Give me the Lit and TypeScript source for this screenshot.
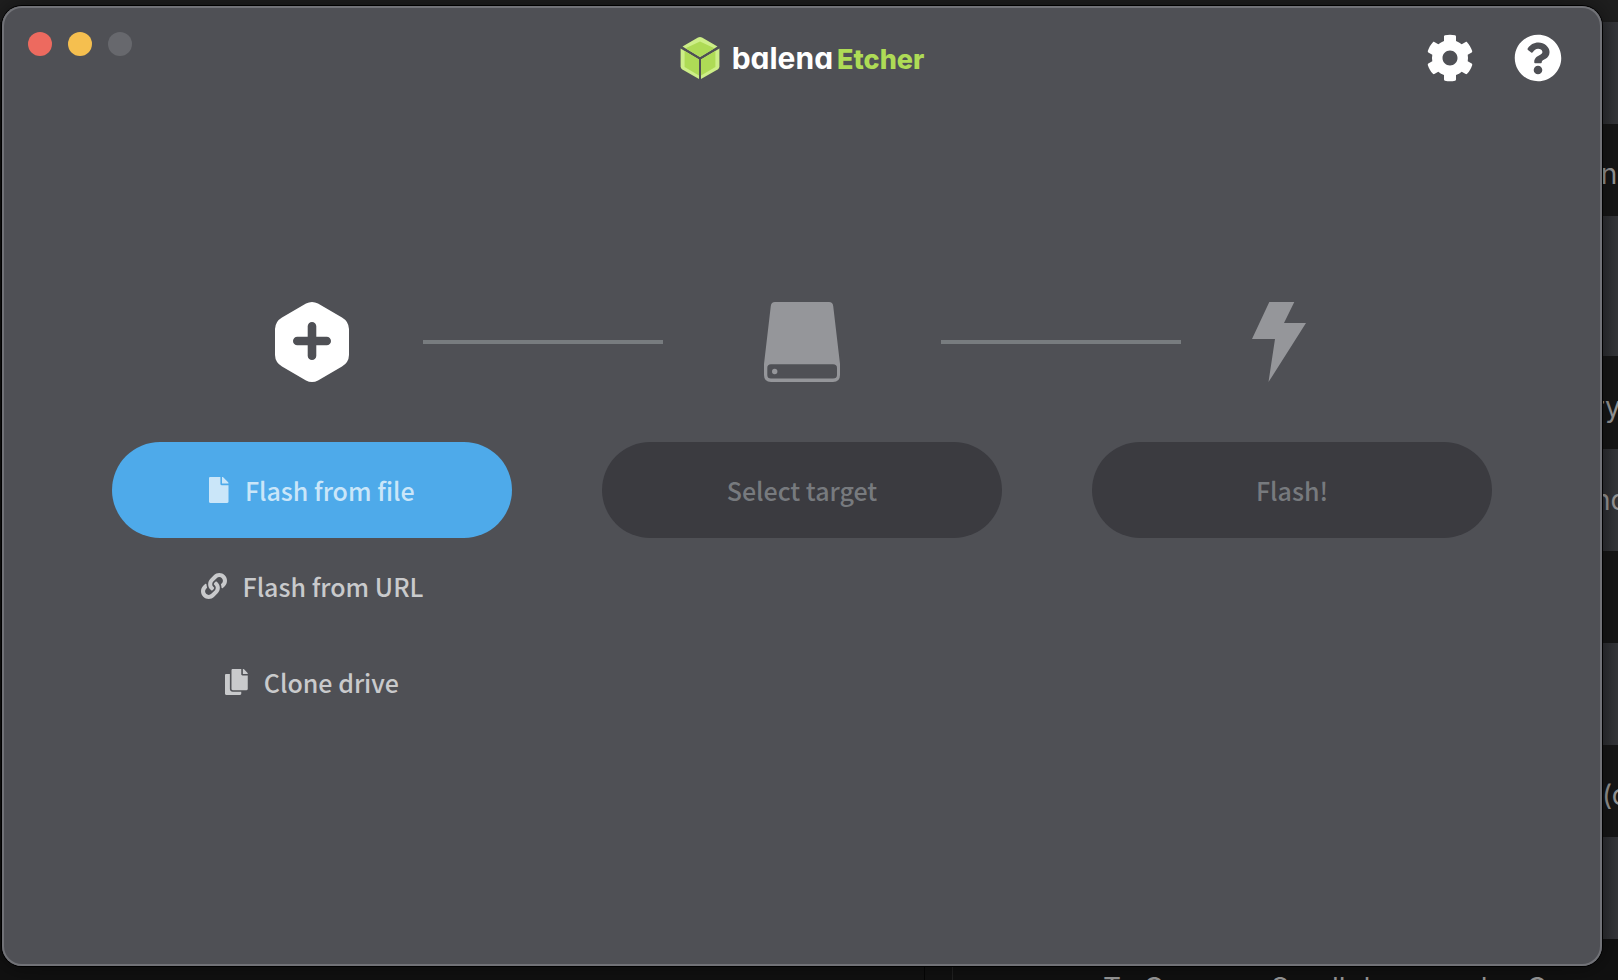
import { LitElement, html, css, svg } from "lit";
import { customElement, property } from "lit/decorators.js";

const GLYPHS: Record<string, { box: string; d: string }> = {
  cog: {
    box: "0 0 512 512",
    d: "M487.4 315.7l-42.6-24.6c4.3-23.2 4.3-47 0-70.2l42.6-24.6c4.9-2.8 7.1-8.6 5.5-14-11.1-35.6-30-67.8-54.7-94.6-3.8-4.1-10-5.1-14.8-2.3L380.8 110c-17.9-15.4-38.5-27.3-60.8-35.1V25.8c0-5.6-3.9-10.5-9.4-11.7-36.7-8.2-74.3-7.8-109.2 0-5.5 1.2-9.4 6.1-9.4 11.7V75c-22.2 7.9-42.8 19.8-60.8 35.1L88.7 85.5c-4.9-2.8-11-1.9-14.8 2.3-24.7 26.7-43.6 58.9-54.7 94.6-1.7 5.4.6 11.2 5.5 14L67.3 221c-4.3 23.2-4.3 47 0 70.2l-42.6 24.6c-4.9 2.8-7.1 8.6-5.5 14 11.1 35.6 30 67.8 54.7 94.6 3.8 4.1 10 5.1 14.8 2.3l42.6-24.6c17.9 15.4 38.5 27.3 60.8 35.1v49.2c0 5.6 3.9 10.5 9.4 11.7 36.7 8.2 74.3 7.8 109.2 0 5.5-1.2 9.4-6.1 9.4-11.7v-49.2c22.2-7.9 42.8-19.8 60.8-35.1l42.6 24.6c4.9 2.8 11 1.9 14.8-2.3 24.7-26.7 43.6-58.9 54.7-94.6 1.5-5.5-.7-11.3-5.6-14.1zM256 336c-44.1 0-80-35.9-80-80s35.9-80 80-80 80 35.9 80 80-35.9 80-80 80z",
  },
  question: {
    box: "0 0 512 512",
    d: "M504 256c0 136.997-111.043 248-248 248S8 392.997 8 256C8 119.083 119.043 8 256 8s248 111.083 248 248zM262.655 90c-54.497 0-89.255 22.957-116.549 63.758-3.536 5.286-2.353 12.415 2.715 16.258l34.699 26.31c5.205 3.947 12.621 3.008 16.665-2.122 17.864-22.658 30.113-35.797 57.303-35.797 20.429 0 45.698 13.148 45.698 32.958 0 14.976-12.363 22.667-32.534 33.976C247.128 238.528 216 254.941 216 296v4c0 6.627 5.373 12 12 12h56c6.627 0 12-5.373 12-12v-1.333c0-28.462 83.186-29.647 83.186-106.667 0-58.002-60.165-102-116.531-102zM256 338c-25.365 0-46 20.635-46 46 0 25.364 20.635 46 46 46s46-20.636 46-46c0-25.365-20.635-46-46-46z",
  },
  file: {
    box: "0 0 384 512",
    d: "M224 136V0H24C10.7 0 0 10.7 0 24v464c0 13.3 10.7 24 24 24h336c13.3 0 24-10.7 24-24V160H248c-13.2 0-24-10.8-24-24zm160-14.1v6.1H256V0h6.1c6.4 0 12.5 2.5 17 7l97.9 98c4.5 4.5 7 10.6 7 16.9z",
  },
  link: {
    box: "0 0 512 512",
    d: "M326.612 185.391c59.747 59.809 58.927 155.698.36 214.59-.11.12-.24.25-.36.37l-67.2 67.2c-59.27 59.27-155.699 59.262-214.96 0-59.27-59.26-59.27-155.7 0-214.96l37.106-37.106c9.84-9.84 26.786-3.3 27.294 10.606.648 17.722 3.826 35.527 9.69 52.721 1.986 5.822.567 12.262-3.783 16.612l-13.087 13.087c-28.026 28.026-28.905 73.66-1.155 101.96 28.024 28.579 74.086 28.749 102.325.51l67.2-67.19c28.191-28.191 28.073-73.757 0-101.83-3.701-3.694-7.429-6.564-10.341-8.569a16.037 16.037 0 0 1-6.947-12.606c-.396-10.567 3.348-21.456 11.698-29.806l21.054-21.055c5.521-5.521 14.182-6.199 20.584-1.731a152.482 152.482 0 0 1 20.522 17.197zM467.547 44.449c-59.261-59.262-155.69-59.27-214.96 0l-67.2 67.2c-.12.12-.25.25-.36.37-58.566 58.892-59.387 154.781.36 214.59a152.454 152.454 0 0 0 20.521 17.196c6.402 4.468 15.064 3.789 20.584-1.731l21.054-21.055c8.35-8.35 12.094-19.239 11.698-29.806a16.037 16.037 0 0 0-6.947-12.606c-2.912-2.005-6.64-4.875-10.341-8.569-28.073-28.073-28.191-73.639 0-101.83l67.2-67.19c28.239-28.239 74.3-28.069 102.325.51 27.75 28.3 26.872 73.934-1.155 101.96l-13.087 13.087c-4.35 4.35-5.769 10.79-3.783 16.612 5.864 17.194 9.042 34.999 9.69 52.721.509 13.906 17.454 20.446 27.294 10.606l37.106-37.106c59.271-59.259 59.271-155.699.001-214.959z",
  },
  copy: {
    box: "0 0 448 512",
    d: "M320 448v40c0 13.255-10.745 24-24 24H24c-13.255 0-24-10.745-24-24V120c0-13.255 10.745-24 24-24h72v296c0 30.879 25.121 56 56 56h168zm0-344V0H152c-13.255 0-24 10.745-24 24v368c0 13.255 10.745 24 24 24h272c13.255 0 24-10.745 24-24V128H344c-13.2 0-24-10.8-24-24zm120.971-31.029L375.029 7.029A24 24 0 0 0 358.059 0H352v96h96v-6.059a24 24 0 0 0-7.029-16.97z",
  },
};

@customElement("glyph-icon")
export class GlyphIcon extends LitElement {
  @property() name = "file";

  static styles = css`
    :host {
      display: block;
      height: 26px;
    }
    .glyph {
      display: block;
      height: 100%;
      fill: currentColor;
    }
  `;

  render() {
    const g = GLYPHS[this.name];
    return html`<svg class="glyph" viewBox=${g.box} aria-hidden="true">${svg`<path d=${g.d}></path>`}</svg>`;
  }
}

/* The sheet that shows past the right and bottom edges of the window. */
@customElement("desktop-backdrop")
export class DesktopBackdrop extends LitElement {
  static styles = css`
    :host {
      display: flex;
      flex-direction: column;
      overflow: hidden;
      background: #111111;
      font-family: Inter, "Liberation Sans", sans-serif;
      font-size: 28px;
      color: #9b9b9b;
    }
    .bar {
      flex: none;
      height: 22px;
      background: #1f1f1f;
    }
    .rows {
      flex: none;
      align-self: flex-end;
      width: 24px;
      display: grid;
      grid-template-rows: 102px 92px 140px 93px 102px 92px 102px 92px 102px;
    }
    .row {
      display: flex;
      align-items: center;
      overflow: hidden;
      white-space: pre;
      background: #171717;
    }
    .row:nth-child(even) {
      padding-top: 8px;
    }
    .row:nth-child(odd) {
      background: linear-gradient(90deg, #2b2c2f, #36373b);
    }
    .foot {
      flex: none;
      display: grid;
      grid-template-columns: 925fr 28fr 665fr;
      height: 41px;
      overflow: hidden;
    }
    .pane {
      border-right: 1px solid #050505;
    }
    .gutter {
      border-right: 1px solid #222222;
    }
    .line {
      padding: 34px 0 0 150px;
      min-width: 0;
      line-height: 30px;
      white-space: nowrap;
    }
  `;

  render() {
    const rows = ["", "in", "", "ry", "nd", "", "", " (c", ""];
    return html`
      <div class="bar"></div>
      <div class="rows">${rows.map((t) => html`<div class="row">${t}</div>`)}</div>
      <div class="foot">
        <div class="pane"></div>
        <div class="gutter"></div>
        <div class="line">To Common Scroll down cycles C</div>
      </div>
    `;
  }
}

@customElement("app-root")
export class AppRoot extends LitElement {
  static styles = css`
    :host {
      display: grid;
      height: 100vh;
      overflow: hidden;
      font-family: "Noto Sans CJK SC", "Noto Sans", sans-serif;
      --panel: #4f5055;
      --muted: #95969a;
    }
    * {
      box-sizing: border-box;
    }
    desktop-backdrop,
    .window {
      grid-area: 1 / 1;
      min-width: 0;
      min-height: 0;
    }
    .window {
      z-index: 1;
      margin: 6px 16px 14px 2px;
      border-radius: 20px;
      background: var(--panel);
      box-shadow:
        inset 0 0 0 2px #717277,
        0 0 0 1px #000000,
        0 0 24px rgba(0, 0, 0, 0.5);
    }
    button {
      border: 0;
      padding: 0;
      background: none;
      color: inherit;
      font: inherit;
    }
    .header {
      display: grid;
      grid-template-columns: 1fr auto 1fr;
      align-items: start;
      padding: 26px 40px 0 26px;
    }
    .lights {
      display: flex;
      gap: 16px;
    }
    .light {
      width: 24px;
      height: 24px;
      border-radius: 50%;
    }
    .close {
      background: #ed6a5f;
    }
    .minimise {
      background: #f5bf4f;
    }
    .zoom {
      background: #67686d;
    }
    .brand {
      display: flex;
      align-items: center;
      gap: 12px;
      padding-top: 4px;
      margin-right: -14px;
    }
    .cube {
      display: block;
      width: 40px;
      height: 44px;
    }
    .wordmark {
      display: flex;
      align-items: baseline;
      gap: 4px;
      margin: 0;
      font-family: Inter, "Liberation Sans", sans-serif;
      font-feature-settings: "cv11";
      font-size: 30px;
      font-weight: 700;
      line-height: 42px;
      color: #ffffff;
    }
    .accent {
      color: #aedb56;
      font-size: 27px;
      font-weight: 800;
      line-height: 36px;
    }
    .tools {
      display: flex;
      justify-content: flex-end;
      gap: 40px;
      padding-top: 2px;
      color: #ffffff;
    }
    .tools glyph-icon {
      height: 48px;
    }
    .track {
      display: grid;
      grid-template-columns: 221fr 240fr 278fr 240fr 221fr;
      align-items: center;
      justify-items: center;
      padding: 220px 12.5% 60px;
    }
    .mark {
      display: block;
      width: 80px;
      height: 80px;
      fill: var(--muted);
    }
    .lit {
      fill: #ffffff;
    }
    .rule {
      justify-self: stretch;
      height: 4px;
      background: #787c7f;
    }
    .steps {
      display: grid;
      grid-template-columns: repeat(3, 1fr);
      gap: 90px;
      padding: 0 110px;
    }
    .step {
      display: flex;
      flex-direction: column;
    }
    .action {
      display: flex;
      align-items: center;
      justify-content: center;
      gap: 16px;
      height: 96px;
      border-radius: 48px;
      font-size: 25px;
      font-weight: 500;
      line-height: 40px;
      color: #c9cacc;
    }
    .primary {
      background: #4eaaea;
      color: #cae6f9;
    }
    .action:disabled {
      background: #3b3b40;
      color: #777a7e;
    }
  `;

  render() {
    return html`
      <desktop-backdrop aria-hidden="true"></desktop-backdrop>
      <main class="window">
        <header class="header">
          <div class="lights">
            <button class="light close" aria-label="Close"></button>
            <button class="light minimise" aria-label="Minimise"></button>
            <button class="light zoom" aria-label="Zoom" disabled></button>
          </div>
          <div class="brand">
            <svg class="cube" viewBox="0 0 40 44" aria-hidden="true">
              <path fill="#cdee88" d="M18 1.600Q20 .4 22 1.600L37.500 10.500L20 21L2.500 10.500Z"></path>
              <path fill="#aedb56" d="M20 5.500L34.500 12.300L20 21L5.500 12.300Z"></path>
              <path fill="#cdee88" d="M.6 12.500L19 23.500V43L2.400 33.500Q.6 32.400 .6 30.400Z"></path>
              <path fill="#aedb56" d="M4.600 15L19 23.500V39.500L4.600 31Z"></path>
              <path fill="#cdee88" d="M39.400 12.500L21 23.500V43L37.600 33.500Q39.400 32.400 39.400 30.400Z"></path>
              <path fill="#aedb56" d="M35.400 15L21 23.500V39.500L35.400 31Z"></path>
            </svg>
            <h1 class="wordmark"><span>balena</span><span class="accent">Etcher</span></h1>
          </div>
          <div class="tools">
            <button aria-label="Settings"><glyph-icon name="cog"></glyph-icon></button>
            <button aria-label="Help"><glyph-icon name="question"></glyph-icon></button>
          </div>
        </header>

        <div class="track" aria-hidden="true">
          <svg class="mark lit" viewBox="1 0 80 80">
            <path
              fill-rule="evenodd"
              d="M34 1.500Q40-1.500 46 1.500L70 15.500Q76.800 19.500 77 27V53Q76.800 60.500 70 64.500L46 78.500Q40 81.500 34 78.500L10 64.500Q3.200 60.500 3 53V27Q3.200 19.500 10 15.500ZM40 20A4.300 4.300 0 0 0 35.700 24.300V34.700H25.300A4.300 4.300 0 0 0 25.300 43.300H35.700V53.700A4.300 4.300 0 0 0 44.300 53.700V43.300H54.700A4.300 4.300 0 0 0 54.700 34.700H44.300V24.300A4.300 4.300 0 0 0 40 20Z"
            ></path>
          </svg>
          <div class="rule"></div>
          <svg class="mark" viewBox="0 0 80 80">
            <path
              fill-rule="evenodd"
              d="M13 0H67Q70.800 0 71.200 4L78 62V73Q78 80 71 80H9Q2 80 2 73V62L8.800 4Q9.200 0 13 0ZM9 62.300Q5.300 62.300 5.300 66V73Q5.300 76.500 9 76.500H71Q75 76.500 75 73V66Q75 62.300 71 62.300Z"
            ></path>
            <circle cx="12.700" cy="69.500" r="2.700"></circle>
          </svg>
          <div class="rule"></div>
          <svg class="mark" viewBox="0 0 80 80">
            <path d="M17.300 0H42.300L32 21H54L16.500 80L23 37H0Z"></path>
          </svg>
        </div>

        <div class="steps">
          <section class="step">
            <button class="action primary"><glyph-icon name="file"></glyph-icon>Flash from file</button>
            <button class="action"><glyph-icon name="link"></glyph-icon>Flash from URL</button>
            <button class="action"><glyph-icon name="copy"></glyph-icon>Clone drive</button>
          </section>
          <section class="step">
            <button class="action" disabled>Select target</button>
          </section>
          <section class="step">
            <button class="action" disabled>Flash!</button>
          </section>
        </div>
      </main>
    `;
  }
}
